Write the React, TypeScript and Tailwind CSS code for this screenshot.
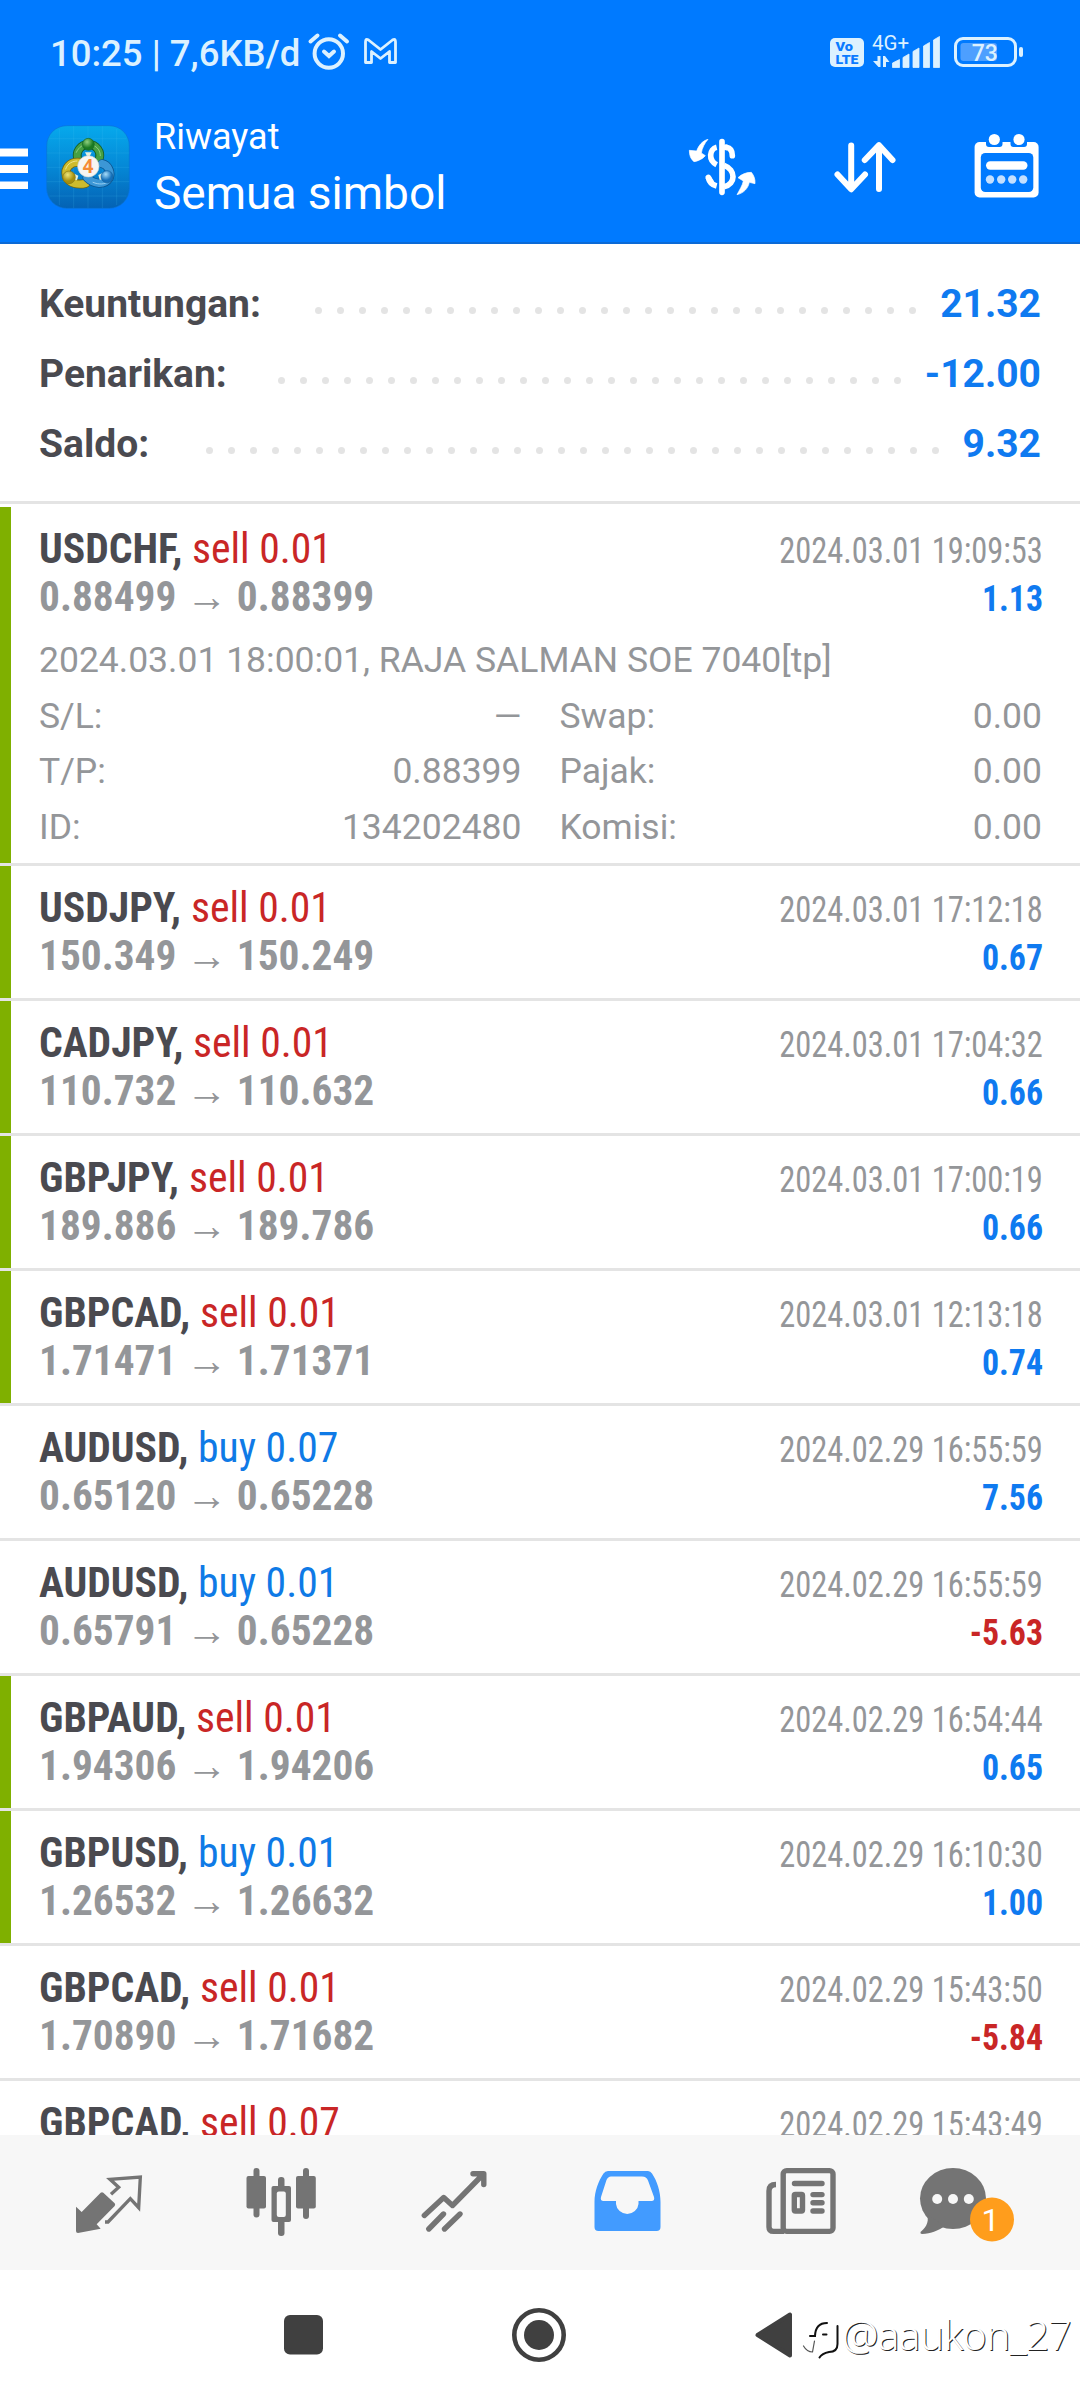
import React from 'react';

interface Deal {
  symbol: string;
  side: 'buy' | 'sell';
  volume: string;
  time: string;
  prices?: [string, string];
  profit?: string;
  // closed by take profit, marked with the green strip
  tp?: boolean;
}

const deals: Deal[] = [
  { symbol: 'USDJPY', side: 'sell', volume: '0.01', prices: ['150.349', '150.249'], time: '2024.03.01 17:12:18', profit: '0.67', tp: true },
  { symbol: 'CADJPY', side: 'sell', volume: '0.01', prices: ['110.732', '110.632'], time: '2024.03.01 17:04:32', profit: '0.66', tp: true },
  { symbol: 'GBPJPY', side: 'sell', volume: '0.01', prices: ['189.886', '189.786'], time: '2024.03.01 17:00:19', profit: '0.66', tp: true },
  { symbol: 'GBPCAD', side: 'sell', volume: '0.01', prices: ['1.71471', '1.71371'], time: '2024.03.01 12:13:18', profit: '0.74', tp: true },
  { symbol: 'AUDUSD', side: 'buy', volume: '0.07', prices: ['0.65120', '0.65228'], time: '2024.02.29 16:55:59', profit: '7.56' },
  { symbol: 'AUDUSD', side: 'buy', volume: '0.01', prices: ['0.65791', '0.65228'], time: '2024.02.29 16:55:59', profit: '-5.63' },
  { symbol: 'GBPAUD', side: 'sell', volume: '0.01', prices: ['1.94306', '1.94206'], time: '2024.02.29 16:54:44', profit: '0.65', tp: true },
  { symbol: 'GBPUSD', side: 'buy', volume: '0.01', prices: ['1.26532', '1.26632'], time: '2024.02.29 16:10:30', profit: '1.00', tp: true },
  { symbol: 'GBPCAD', side: 'sell', volume: '0.01', prices: ['1.70890', '1.71682'], time: '2024.02.29 15:43:50', profit: '-5.84' },
  { symbol: 'GBPCAD', side: 'sell', volume: '0.07', time: '2024.02.29 15:43:49' },
];

const summary = [
  { label: 'Keuntungan:', value: '21.32', dots: 28 },
  { label: 'Penarikan:', value: '-12.00', dots: 29 },
  { label: 'Saldo:', value: '9.32', dots: 34 },
];

const details = [
  ['S/L:', '—', 'Swap:', '0.00'],
  ['T/P:', '0.88399', 'Pajak:', '0.00'],
  ['ID:', '134202480', 'Komisi:', '0.00'],
];

const StatusBar = () => (
  <div className="flex h-[86px] items-center pt-[18px] pl-[50px] pr-[52px]">
    <span className="mt-[4px] w-[255px] whitespace-nowrap text-[36.5px] leading-[44px] font-medium text-[#dcf1ff]">
      10:25 | 7,6KB/d
    </span>
    <svg className="h-[40px] w-[48px]" viewBox="305 32 48 40" fill="none" stroke="#dcf1ff" strokeWidth="4" strokeLinecap="round">
      <circle cx="328.8" cy="53.5" r="14.2" />
      <path d="M310.5 41.5l7-6M340 35.500l7 6M324 51.500l5 4.500 5-4.500" />
    </svg>
    <svg className="ml-[8px] h-[40px] w-[40px]" viewBox="361 32 40 40" fill="none" stroke="#dcf1ff" strokeWidth="2.8" strokeLinejoin="round">
      <path d="M365.500 42Q365.500 38 368.500 40L380.500 49.500L392.500 40Q395.500 38 395.500 42V62.500H389.500V51.500L380.500 58.500L371.500 51.500V62.500H365.500Z" />
    </svg>
    <svg className="ml-auto h-[40px] w-[200px]" viewBox="828 32 200 40" fill="#dcf1ff">
      <rect x="830" y="38" width="34" height="29" rx="5" />
      <g fill="#0a7aff" fontFamily="Roboto" fontWeight="900" fontSize="13">
        <text x="835.500" y="51" textLength="17.500" lengthAdjust="spacingAndGlyphs">Vo</text>
        <text x="835.500" y="63.500" textLength="23" lengthAdjust="spacingAndGlyphs">LTE</text>
      </g>
      <text x="872" y="50" fontFamily="Roboto" fontSize="20.500" textLength="37" lengthAdjust="spacingAndGlyphs">4G+</text>
      <path d="M877.500 56h3v11h-2l-5.500-6h4.500zM883 67v-11h2l4.500 6h-3.500v5z" />
      <path d="M892.500 63l7-3.500v8h-7zM903 57.500l6-3.500v13.500h-6zM913 51.500l6-3.500v19.500h-6zM923.500 46l6-3.500v25h-6zM933.500 40l6-3.500v31h-6z" stroke="#dcf1ff" strokeWidth=".8" strokeLinejoin="round" />
      <rect x="955.500" y="38.500" width="60" height="27" rx="7.500" fill="none" stroke="#dcf1ff" strokeWidth="3" />
      <rect x="1019" y="47" width="4" height="10" rx="2" />
      <rect x="960.500" y="43" width="36.500" height="18" rx="3" fill="#4d9fff" />
      <text x="984.800" y="61" textAnchor="middle" fontFamily="Roboto" fontWeight="500" fontSize="23">73</text>
    </svg>
  </div>
);

const AppLogo = () => (
  <svg className="h-[84px] w-[84px]" viewBox="49 46 252 252">
    <defs>
      <linearGradient id="bg" x1="0" y1="0" x2="0" y2="1">
        <stop offset="0" stopColor="#06a9ec" />
        <stop offset=".5" stopColor="#0588d6" />
        <stop offset="1" stopColor="#0462b4" />
      </linearGradient>
      <radialGradient id="green" cx=".4" cy=".3"><stop offset="0" stopColor="#8fd07e" /><stop offset="1" stopColor="#1a7a22" /></radialGradient>
      <radialGradient id="yellow" cx=".4" cy=".3"><stop offset="0" stopColor="#ece67a" /><stop offset="1" stopColor="#a58e0e" /></radialGradient>
      <radialGradient id="blue" cx=".4" cy=".3"><stop offset="0" stopColor="#a5dcfa" /><stop offset="1" stopColor="#1470ba" /></radialGradient>
    </defs>
    <rect x="51" y="48" width="248" height="248" rx="60" fill="url(#bg)" stroke="#0a72d8" strokeWidth="2" />
    <path d="M89 58V286M132 49V295M175 49V295M218 49V295M261 58V286M59 87H291M51 130H299M51 173H299M51 216H299M59 259H291" stroke="#4fc0f4" strokeOpacity=".25" strokeWidth="2" />
    <g fill="none" strokeLinecap="round">
      <path d="M144 148A34 34 0 1 1 209 148" stroke="#155f25" strokeWidth="26" />
      <path d="M144 148A34 34 0 1 1 209 148" stroke="#46a043" strokeWidth="21" />
      <path d="M150 158C120 155 104 176 110 200C120 224 148 226 168 221" stroke="#6d6410" strokeWidth="27" />
      <path d="M150 158C120 155 104 176 110 200C120 224 148 226 168 221" stroke="#cdbb2d" strokeWidth="22" />
      <path d="M217 162C236 166 246 188 238 206C224 228 192 224 172 204" stroke="#0b5590" strokeWidth="27" />
      <path d="M217 162C236 166 246 188 238 206C224 228 192 224 172 204" stroke="#3c97d6" strokeWidth="22" />
      <path d="M140 128C148 110 162 106 164 106M188 106C206 112 212 126 212 138" stroke="#bde9ac" strokeOpacity=".6" strokeWidth="3" />
      <path d="M108 178C114 160 130 154 142 154" stroke="#fbf7b4" strokeOpacity=".7" strokeWidth="3" />
      <path d="M190 218C208 226 226 224 236 216" stroke="#bce6fc" strokeOpacity=".7" strokeWidth="3" />
    </g>
    <path d="M166 128h20l-6 12h-8zM134 192l12 6-4 14-8-2zM218 190l-12 6 4 14 8 0z" fill="#e6f0de" />
    <circle cx="176" cy="104" r="18" fill="url(#green)" stroke="#14662a" strokeWidth="2" />
    <circle cx="118" cy="203" r="19" fill="url(#yellow)" stroke="#857510" strokeWidth="2" />
    <circle cx="232" cy="201" r="18" fill="url(#blue)" stroke="#105e9c" strokeWidth="2" />
    <circle cx="176" cy="170" r="32" fill="#f7f5f2" stroke="#c9d2cf" strokeWidth="2" />
    <text x="175" y="190" textAnchor="middle" fontFamily="Open Sans" fontWeight="700" fontSize="56" fill="#f58a35">4</text>
  </svg>
);

const Header = () => (
  <header className="h-[244px] shrink-0 border-b-2 border-[#0b6ad6] bg-[#007aff] text-white">
    <StatusBar />
    <div className="flex items-start pt-[34px] pr-[35px]">
      <svg className="h-[94px] w-[46px]" viewBox="0 120 46 94" fill="#fff">
        <path d="M0 148.500h28v8H0zM0 165h28v8H0zM0 181.500h28v7.500H0z" />
      </svg>
      <div className="pt-[5px]"><AppLogo /></div>
      <div className="-mt-[3px] ml-[24px] flex flex-col gap-[8px]">
        <span className="text-[36px] leading-[40px]">Riwayat</span>
        <span className="text-[46px] leading-[56px]">Semua simbol</span>
      </div>
      <svg className="mt-[5px] ml-auto h-[80px] w-[90px]" viewBox="0 0 270 240" fill="none" stroke="#fff" strokeWidth="17">
        <path d="M126 50V202M139 67C150 69 157 78 157 92M85 157C87 162 90 166 93 170" strokeLinecap="round" />
        <path d="M110 67C88 72 84 106 110 119M134 66L142 68M132 121C168 134 168 178 132 185M85 157C88 172 98 180 110 183" />
        <path d="M84 43C66 48 56 62 50 78L28 76C28 90 32 103 42 110C56 108 70 100 76 92L64 84C66 70 74 54 84 43ZM171 209C178 196 188 180 190 168L174 158C184 148 198 142 214 142C222 152 226 162 225 176L208 172C204 190 192 204 171 209Z" fill="#fff" stroke="#fff" strokeWidth="2" />
      </svg>
      <svg className="ml-[55px] h-[94px] w-[80px]" viewBox="825 120 80 94" fill="none" stroke="#fff" strokeWidth="6" strokeLinecap="round" strokeLinejoin="round">
        <path d="M851.200 145.500V189M837.500 174.500L851.200 189.300L865 174.500M879 189V145.500M864.800 160L879 145.200L892.500 160" />
      </svg>
      <svg className="ml-[60px] h-[94px] w-[80px]" viewBox="965 120 80 94" fill="#fff">
        <rect x="974.600" y="142" width="64" height="55.500" rx="5" />
        <path d="M986 140H1002.500V144Q1002.500 147 999.500 147H989Q986 147 986 144ZM1010.500 140H1027V144Q1027 147 1024 147H1013.500Q1010.500 147 1010.500 144Z" fill="#007aff" />
        <circle cx="994.300" cy="139.500" r="5.600" />
        <circle cx="1019" cy="139.500" r="5.600" />
        <rect x="980.800" y="153" width="52.500" height="39" rx="4.500" fill="#007aff" />
        <rect x="986" y="161.300" width="41.500" height="8.500" rx="4.200" />
        <g fill="#c4e0ff">
          <circle cx="990" cy="179.500" r="4.200" />
          <circle cx="1001.200" cy="179.500" r="4.200" />
          <circle cx="1012.200" cy="179.500" r="4.200" />
          <circle cx="1023.200" cy="179.500" r="4.200" />
        </g>
      </svg>
    </div>
  </header>
);

const Summary = () => (
  <section className="h-[260px] shrink-0 border-b-[3px] border-[#e4e4e4] pt-[25px] pr-[39px] pl-[39px]">
    {summary.map((row) => (
      <div key={row.label} className="flex h-[70px] items-center text-[39px] leading-[70px] font-bold">
        <span className="text-[#4a4a50]">{row.label}</span>
        <div className="mr-[24px] flex flex-1 justify-end gap-[15px] pt-[12px]">
          {Array.from({ length: row.dots }, (_, i) => (
            <i key={i} className="h-[7px] w-[7px] rounded-full bg-[#e4e4e4]" />
          ))}
        </div>
        <span className="text-[#0f7af0]">{row.value}</span>
      </div>
    ))}
  </section>
);

const DealLines: React.FC<{ deal: Deal }> = ({ deal }) => (
  <div className="font-['Roboto_Condensed',Roboto,sans-serif] whitespace-nowrap">
    <div className="flex h-[48px] items-baseline justify-between leading-[48px]">
      <div className="text-[42.5px]">
        <span className="inline-block origin-left scale-x-[.98] font-bold text-[#4a4a50]">{deal.symbol},</span>{' '}
        <span className={`-ml-[3px] inline-block origin-left scale-x-[.98] ${deal.side === 'buy' ? 'text-[#0f7ae6]' : 'text-[#c92626]'}`}>
          {deal.side} {deal.volume}
        </span>
      </div>
      <span className="inline-block origin-right scale-x-[.9] text-[36px] text-[#949699]">{deal.time}</span>
    </div>
    {deal.prices && (
      <div className="flex h-[49px] items-baseline justify-between leading-[48px] font-bold">
        <span className="inline-block origin-left scale-x-[.973] text-[42.5px] text-[#949699]">
          {deal.prices[0]} → {deal.prices[1]}
        </span>
        <span className={`inline-block origin-right scale-x-[.94] text-[36px] ${deal.profit?.startsWith('-') ? 'text-[#c92626]' : 'text-[#0f7af0]'}`}>
          {deal.profit}
        </span>
      </div>
    )}
  </div>
);

const DealRow: React.FC<{ deal: Deal }> = ({ deal }) => (
  <div className="flex h-[135px] shrink-0 border-b-[3px] border-[#e4e4e4]">
    <div className={`w-[11px] shrink-0 ${deal.tp ? 'bg-[#7fb000]' : ''}`} />
    <div className="flex-1 pt-[18px] pr-[37px] pl-[28px]">
      <DealLines deal={deal} />
    </div>
  </div>
);

const ExpandedDeal = () => (
  <div className="flex h-[362px] shrink-0 border-b-[3px] border-[#e4e4e4] pt-[3px]">
    <div className="w-[11px] shrink-0 bg-[#7fb000]" />
    <div className="flex-1 pt-[18px] pr-[37px] pl-[28px]">
      <DealLines
        deal={{ symbol: 'USDCHF', side: 'sell', volume: '0.01', prices: ['0.88499', '0.88399'], time: '2024.03.01 19:09:53', profit: '1.13', tp: true }}
      />
      <div className="mr-px pt-[11px] text-[35.5px] leading-[55.6px] text-[#949699]">
        <p>2024.03.01 18:00:01, RAJA SALMAN SOE 7040[tp]</p>
        {details.map(([left, leftValue, right, rightValue]) => (
          <div key={left} className="grid grid-cols-2 gap-x-[38px]">
            <div className="flex justify-between"><span>{left}</span><span>{leftValue}</span></div>
            <div className="flex justify-between"><span>{right}</span><span>{rightValue}</span></div>
          </div>
        ))}
      </div>
    </div>
  </div>
);

const TabBar = () => (
  <nav className="flex h-[135px] shrink-0 items-center bg-[#f7f7f7] px-[21px] pb-px">
    <div className="flex flex-1 justify-center">
      <svg className="h-[80px] w-[120px]" viewBox="-36 0 360 240">
        <path d="M48 134L65 150L122 92q4-3 8 0L164 124q3 4 0 8L110 187L122 200L54 213q-6 0-6-6Z" fill="#747474" />
        <path d="M153 97L176 76L150 52L241 45L236 137L211 110L144 180h-9" fill="none" stroke="#747474" strokeWidth="10" />
      </svg>
    </div>
    <div className="flex flex-1 justify-center">
      <svg className="h-[80px] w-[120px]" viewBox="221 2162 120 80" fill="#747474">
        <rect x="253.500" y="2168" width="6" height="49.500" rx="3" />
        <rect x="246.500" y="2176" width="19.500" height="32.500" rx="2" />
        <rect x="278" y="2177" width="6.500" height="59" rx="3" />
        <rect x="271.500" y="2186" width="19.500" height="36" rx="2" />
        <rect x="276.800" y="2191.500" width="9" height="25.500" rx="2" fill="#f7f7f7" />
        <rect x="303" y="2168" width="6" height="51" rx="3" />
        <rect x="296" y="2176" width="19.800" height="32.500" rx="2" />
      </svg>
    </div>
    <div className="flex flex-1 justify-center">
      <svg className="h-[80px] w-[120px]" viewBox="394 2162 120 80" fill="none" stroke="#747474" strokeWidth="5.400" strokeLinecap="round" strokeLinejoin="round">
        <path d="M424.300 2215.500L443.700 2197.500L452.500 2205.500L483 2174.500M473 2173.700H483.800V2184.500" />
        <path d="M443.500 2214L428.800 2229M460 2214L444.500 2229" />
      </svg>
    </div>
    <div className="flex flex-1 justify-center">
      <svg className="h-[80px] w-[120px]" viewBox="567 2162 120 80" fill="#429bff">
        <path d="M608 2171H648Q650.500 2171 652 2173.500C657 2181 660.500 2191 660.500 2202V2227q0 4-4 4H598.500q-4 0-4-4V2202C594.500 2191 598.500 2181 603.500 2173.500Q605 2171 608 2171Z" />
        <path d="M611 2176.500H642q4.500 0 6 4L654 2197q1 4-2.500 4H638.500V2204a11.300 11 0 0 1-22.500 0V2201H603.500q-3.500 0-2.500-4L606.500 2180q1.500-3.500 4.500-3.500Z" fill="#f7f7f7" />
      </svg>
    </div>
    <div className="flex flex-1 justify-center">
      <svg className="h-[80px] w-[120px]" viewBox="740 2162 120 80" fill="none" stroke="#747474" strokeWidth="5.400">
        <rect x="783.200" y="2170.600" width="49.800" height="60.800" rx="3.500" />
        <path d="M776 2184.500Q769 2184.500 769 2191V2227Q769 2231.400 773.500 2231.400H784" />
        <path d="M794.500 2183.500H822M813 2194.600H822M813 2202.800H822M813 2211H822" strokeLinecap="round" />
        <rect x="794.300" y="2194.500" width="8.200" height="16.500" rx="1" />
      </svg>
    </div>
    <div className="flex flex-1 justify-center">
      <svg className="h-[80px] w-[120px]" viewBox="913 2162 120 80">
        <ellipse cx="953" cy="2198.500" rx="33" ry="30.500" fill="#747474" />
        <path d="M927 2215C930 2223 924 2229 920.500 2232Q920 2234 922 2234C931 2234 939 2230 945 2226Z" fill="#747474" />
        <g fill="#f7f7f7">
          <circle cx="937.200" cy="2199" r="5" />
          <circle cx="953" cy="2199" r="5" />
          <circle cx="968.800" cy="2199" r="5" />
        </g>
        <circle cx="992" cy="2219.500" r="22" fill="#ff9d1c" />
        <text x="990.500" y="2231" textAnchor="middle" fontFamily="Roboto" fontSize="32" fill="#fff">1</text>
      </svg>
    </div>
  </nav>
);

const SystemNav = () => (
  <div className="relative flex h-[130px] shrink-0 items-center gap-[175px] bg-white pl-[274px]">
    <svg className="h-[60px] w-[60px]" viewBox="274 2305 60 60" fill="#404040">
      <rect x="284" y="2315" width="39" height="39.500" rx="6" />
    </svg>
    <svg className="h-[60px] w-[60px]" viewBox="509 2305 60 60">
      <circle cx="539" cy="2335" r="24.700" fill="none" stroke="#404040" strokeWidth="4.600" />
      <circle cx="539" cy="2335" r="15" fill="#404040" />
    </svg>
    <svg className="h-[60px] w-[60px]" viewBox="744 2305 60 60" fill="#404040" stroke="#404040" strokeWidth="4" strokeLinejoin="round">
      <path d="M757.500 2335L790 2314.500V2355.500Z" />
    </svg>
    {/* Watermark */}
    <div className="absolute top-[41px] left-[801px] flex items-center">
      <svg className="h-[48px] w-[41px]" viewBox="800 2315 41 48" fill="none" strokeLinecap="round">
        <path d="M802.500 2350Q806 2356 811.500 2356L813.500 2345" stroke="#555" strokeWidth="1.200" />
        <path d="M809 2340H814Q814.500 2327 826 2327M822 2338.500h3.500M836.500 2330V2348Q836.500 2356 828 2356Q821 2357.500 818.500 2361.500" stroke="#111" strokeWidth="2" />
      </svg>
      <span className="-mt-[3px] font-['Noto_Sans',sans-serif] text-[41px] leading-[48px] font-light tracking-[-0.9px] text-white [text-shadow:1px_1px_0_#222]">
        @aaukon_27
      </span>
    </div>
  </div>
);

export default function App() {
  return (
    <div className="flex h-[2400px] w-[1080px] flex-col overflow-hidden bg-white font-['Roboto',sans-serif]">
      <Header />
      <Summary />
      <main className="flex min-h-0 flex-1 flex-col overflow-hidden">
        <ExpandedDeal />
        {deals.map((deal) => (
          <DealRow key={deal.symbol + deal.time + deal.volume} deal={deal} />
        ))}
      </main>
      <TabBar />
      <SystemNav />
    </div>
  );
}
